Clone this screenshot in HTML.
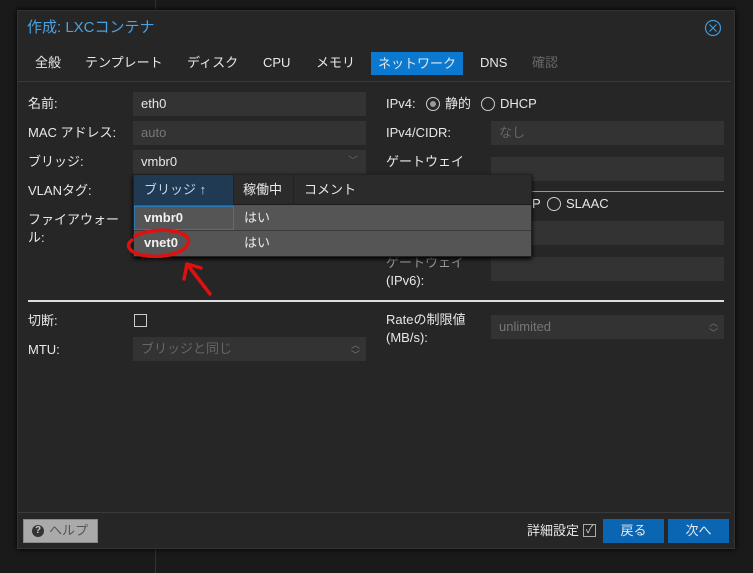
<!DOCTYPE html>
<html><head><meta charset="utf-8"><style>
*{margin:0;padding:0;box-sizing:border-box}
body{width:753px;height:573px;background:#1a1a1a;position:relative;overflow:hidden;font-family:"Liberation Sans","Noto Sans CJK JP",sans-serif;font-size:13px;color:#e8e8e8;line-height:16px}
.a{position:absolute;white-space:nowrap;line-height:16px}
.dlg{position:absolute;left:17px;top:10px;width:718px;height:539px;background:#262626;border:1px solid #333;box-shadow:0 0 6px #000}
.f{position:absolute;background:#333;height:24px;padding:0 8px;line-height:24px;font-size:13px}
.lbl{font-size:13px;color:#e8e8e8}
.radio{position:absolute;width:14px;height:14px;border:1px solid #ccc;border-radius:50%}
</style></head><body>
<div class="a" style="left:155px;top:0;width:1px;height:10px;background:#333"></div>
<div class="a" style="left:155px;top:549px;width:1px;height:24px;background:#333"></div>
<div class="dlg"></div>
<div class="a" style="left:27px;top:19px;font-size:15px;line-height:18px;color:#4aa3df">作成: LXCコンテナ</div>
<svg class="a" style="left:704px;top:19px" width="18" height="18"><circle cx="9" cy="9" r="7.5" fill="none" stroke="#3a9ad9" stroke-width="1.2"/><path d="M5.5 5.5L12.5 12.5M12.5 5.5L5.5 12.5" stroke="#3a9ad9" stroke-width="1.2"/></svg>
<div class="a" style="left:35px;top:55px">全般</div>
<div class="a" style="left:85px;top:55px">テンプレート</div>
<div class="a" style="left:187px;top:55px">ディスク</div>
<div class="a" style="left:263px;top:55px">CPU</div>
<div class="a" style="left:316px;top:55px">メモリ</div>
<div class="a" style="left:371px;top:52px;width:92px;height:23px;background:#0b79d0;padding-left:7px;line-height:23px">ネットワーク</div>
<div class="a" style="left:480px;top:55px">DNS</div>
<div class="a" style="left:532px;top:55px;color:#666">確認</div>
<div class="a" style="left:18px;top:81px;width:713px;height:1px;background:#3a3a3a"></div>

<div class="a lbl" style="left:28px;top:96px">名前:</div>
<div class="a lbl" style="left:28px;top:125px">MAC アドレス:</div>
<div class="a lbl" style="left:28px;top:154px">ブリッジ:</div>
<div class="a lbl" style="left:28px;top:183px">VLANタグ:</div>
<div class="a lbl" style="left:28px;top:211px;line-height:18px;white-space:normal">ファイアウォー<br>ル:</div>
<div class="f" style="left:133px;top:92px;width:233px">eth0</div>
<div class="f" style="left:133px;top:121px;width:233px;color:#777">auto</div>
<div class="f" style="left:133px;top:150px;width:233px">vmbr0<span style="position:absolute;right:8px;color:#666;font-size:10px">﹀</span></div>

<div class="a lbl" style="left:386px;top:96px">IPv4:</div>
<div class="radio" style="left:426px;top:97px"><div style="position:absolute;left:3px;top:3px;width:6px;height:6px;border-radius:50%;background:#999"></div></div>
<div class="a lbl" style="left:445px;top:96px">静的</div>
<div class="radio" style="left:481px;top:97px"></div>
<div class="a lbl" style="left:500px;top:96px">DHCP</div>
<div class="a lbl" style="left:386px;top:125px">IPv4/CIDR:</div>
<div class="f" style="left:491px;top:121px;width:233px;color:#666">なし</div>
<div class="a lbl" style="left:386px;top:154px">ゲートウェイ</div>
<div class="f" style="left:491px;top:157px;width:233px"></div>
<div class="a" style="left:380px;top:191px;width:344px;height:1px;background:#999"></div>
<div class="a lbl" style="left:532px;top:196px">P</div>
<div class="radio" style="left:547px;top:197px"></div>
<div class="a lbl" style="left:566px;top:196px">SLAAC</div>
<div class="f" style="left:491px;top:221px;width:233px"></div>
<div class="a lbl" style="left:386px;top:254px;line-height:18px;color:#999">ゲートウェイ<br><span style="color:#e8e8e8">(IPv6):</span></div>
<div class="f" style="left:491px;top:257px;width:233px"></div>

<div class="a" style="left:28px;top:300px;width:696px;height:2px;background:#ddd"></div>
<div class="a lbl" style="left:28px;top:313px">切断:</div>
<div class="a" style="left:134px;top:314px;width:13px;height:13px;border:1px solid #ccc"></div>
<div class="a lbl" style="left:28px;top:342px">MTU:</div>
<div class="f" style="left:133px;top:337px;width:233px;color:#666">ブリッジと同じ<span style="position:absolute;right:6px;top:0;font-size:9px;line-height:10px;padding-top:3px;color:#777">︿<br>﹀</span></div>
<div class="a lbl" style="left:386px;top:311px;line-height:18px">Rateの制限値<br>(MB/s):</div>
<div class="f" style="left:491px;top:315px;width:233px;color:#777">unlimited<span style="position:absolute;right:6px;top:0;font-size:9px;line-height:10px;padding-top:3px;color:#777">︿<br>﹀</span></div>

<!-- dropdown -->
<div class="a" style="left:133px;top:174px;width:399px;height:83px;background:#555;border:1px solid #222;box-shadow:0 2px 4px #000"></div>
<div class="a" style="left:134px;top:175px;width:397px;height:30px;background:#2b2b2b;border-bottom:1px solid #1c1c1c"></div>
<div class="a" style="left:134px;top:175px;width:99px;height:30px;background:#1f3a52;color:#c8d8e8;padding:7px 0 0 10px">ブリッジ ↑</div>
<div class="a" style="left:233px;top:175px;width:1px;height:30px;background:#222"></div>
<div class="a" style="left:243px;top:182px">稼働中</div>
<div class="a" style="left:293px;top:175px;width:1px;height:30px;background:#222"></div>
<div class="a" style="left:304px;top:182px">コメント</div>
<div class="a" style="left:134px;top:206px;width:100px;height:24px;border:1px solid #2a7ab8"></div>
<div class="a" style="left:134px;top:230px;width:397px;height:1px;background:#3a3a3a"></div>
<div class="a" style="left:144px;top:210px;font-weight:bold;color:#f2f2f2">vmbr0</div>
<div class="a" style="left:244px;top:210px">はい</div>
<div class="a" style="left:144px;top:235px;font-weight:bold;color:#f2f2f2">vnet0</div>
<div class="a" style="left:244px;top:235px">はい</div>

<svg class="a" style="left:0;top:0" width="753" height="573">
<path d="M135 236 C150 228 180 228 188 238 C192 250 170 258 148 256 C130 254 124 246 132 240" fill="none" stroke="#e01010" stroke-width="3.5" stroke-linecap="round"/>
<path d="M210 294 L187 264 M187 264 L184 279 M187 264 L201 268" fill="none" stroke="#e01010" stroke-width="3.5" stroke-linecap="round"/>
</svg>

<div class="a" style="left:18px;top:512px;width:713px;height:1px;background:#3a3a3a"></div>
<div class="a" style="left:23px;top:519px;width:75px;height:24px;background:#aaa;border:1px solid #888;color:#555;display:flex;align-items:center;padding-left:8px;gap:5px"><span style="display:inline-block;width:12px;height:12px;border-radius:50%;background:#333;color:#ccc;font-size:10px;text-align:center;line-height:12px;font-weight:bold">?</span><span style="line-height:16px">ヘルプ</span></div>
<div class="a lbl" style="left:527px;top:523px">詳細設定</div>
<div class="a" style="left:583px;top:524px;width:13px;height:13px;border:1px solid #aaa;font-size:11px;line-height:11px;text-align:center;color:#ccc">✓</div>
<div class="a" style="left:603px;top:519px;width:61px;height:24px;background:#0a66b3;text-align:center;line-height:24px">戻る</div>
<div class="a" style="left:668px;top:519px;width:61px;height:24px;background:#0a66b3;text-align:center;line-height:24px">次へ</div>
</body></html>
